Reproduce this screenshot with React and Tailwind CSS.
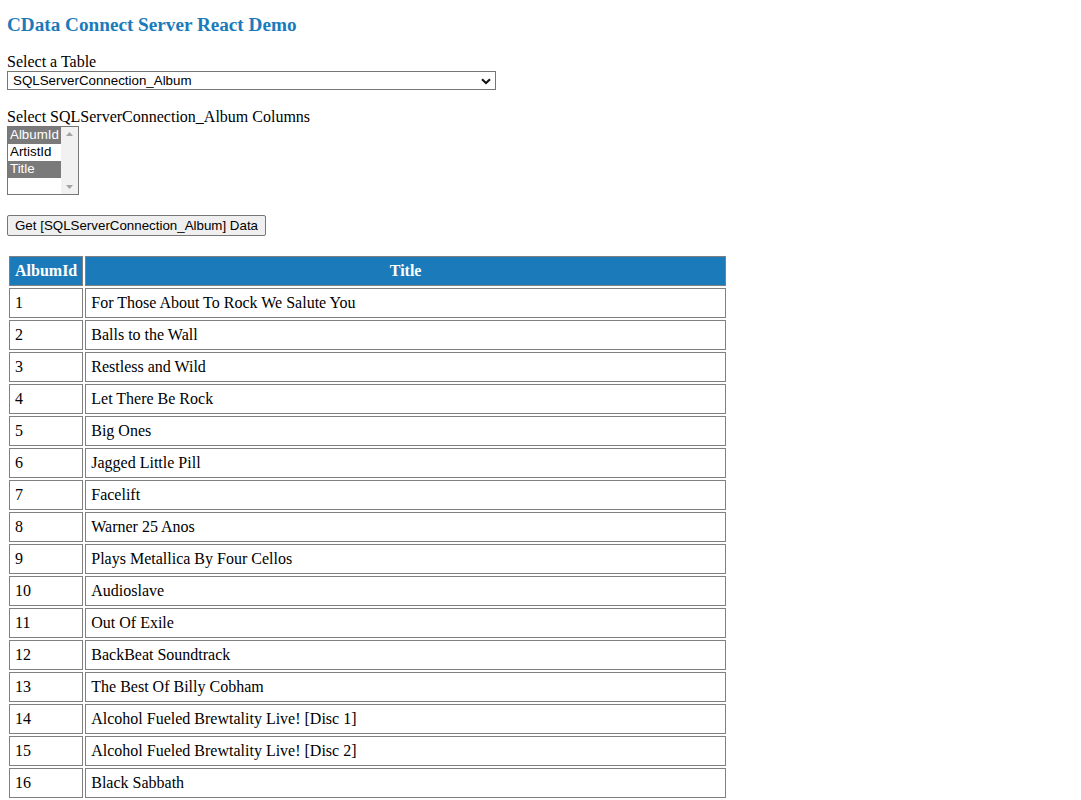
import { useState } from "react";

const albums = [
  "For Those About To Rock We Salute You",
  "Balls to the Wall",
  "Restless and Wild",
  "Let There Be Rock",
  "Big Ones",
  "Jagged Little Pill",
  "Facelift",
  "Warner 25 Anos",
  "Plays Metallica By Four Cellos",
  "Audioslave",
  "Out Of Exile",
  "BackBeat Soundtrack",
  "The Best Of Billy Cobham",
  "Alcohol Fueled Brewtality Live! [Disc 1]",
  "Alcohol Fueled Brewtality Live! [Disc 2]",
  "Black Sabbath",
];

const columns = ["AlbumId", "ArtistId", "Title"];

export default function App() {
  const [selected] = useState(["AlbumId", "Title"]);
  const table = "SQLServerConnection_Album";

  return (
    <div className="min-h-screen bg-white px-[7px] font-['Liberation_Serif',serif] text-black">
      <h3 className="pt-[14px] text-[19.2px] font-bold leading-[21px] text-[#1b7bba]">
        CData Connect Server React Demo
      </h3>

      {/* Table picker */}
      <div className="mt-[18px] text-[16px] leading-[18px]">Select a Table</div>
      <div className="flex h-[19px] w-[489px] items-center justify-between border border-[#767676] pl-[5px] pr-[4px] font-['Liberation_Sans',Arial,sans-serif] text-[13.33px] leading-[15px]">
        <span>{table}</span>
        <svg width="10" height="7" viewBox="0 0 10 7" className="mt-[1px]">
          <path d="M1 1.2 L5 5 L9 1.2" fill="none" stroke="#111" strokeWidth="2" />
        </svg>
      </div>

      {/* Column picker */}
      <div className="mt-[18px] text-[16px] leading-[18px]">Select {table} Columns</div>
      <div className="flex h-[69px] w-[72px] border border-[#767676] font-['Liberation_Sans',Arial,sans-serif] text-[13.33px] leading-[16px]">
        <div className="flex w-[53px] flex-col">
          {columns.map((c) => (
            <div
              key={c}
              className={
                selected.includes(c)
                  ? "h-[17px] bg-[#7a7a7a] pl-[2px] text-white"
                  : "h-[17px] pl-[2px] text-black"
              }
            >
              {c}
            </div>
          ))}
        </div>
        <div className="flex w-[17px] flex-col items-center justify-between bg-[#f1f1f1] py-[5px]">
          <svg width="7" height="4" viewBox="0 0 7 4">
            <path d="M0 4 L3.5 0 L7 4 Z" fill="#a3a3a3" />
          </svg>
          <svg width="7" height="4" viewBox="0 0 7 4">
            <path d="M0 0 L3.5 4 L7 0 Z" fill="#a3a3a3" />
          </svg>
        </div>
      </div>

      <button className="mt-[20px] h-[21px] rounded-[2px] border border-[#767676] bg-[#efefef] px-[7px] font-['Liberation_Sans',Arial,sans-serif] text-[13.33px] leading-[15px] text-black">
        Get [{table}] Data
      </button>

      {/* Results */}
      <table className="mt-[17px] w-[721px] border-separate border-spacing-[2px] text-[16px] leading-[18px]">
        <thead>
          <tr>
            <th className="h-[30px] w-[74px] border border-[#808080] bg-[#1b7bba] px-[5px] text-center font-bold text-white">
              AlbumId
            </th>
            <th className="h-[30px] border border-[#808080] bg-[#1b7bba] px-[5px] text-center font-bold text-white">
              Title
            </th>
          </tr>
        </thead>
        <tbody>
          {albums.map((title, i) => (
            <tr key={i}>
              <td className="h-[30px] border border-[#808080] px-[5px] align-middle">{i + 1}</td>
              <td className="h-[30px] border border-[#808080] px-[5px] align-middle">{title}</td>
            </tr>
          ))}
        </tbody>
      </table>
    </div>
  );
}
